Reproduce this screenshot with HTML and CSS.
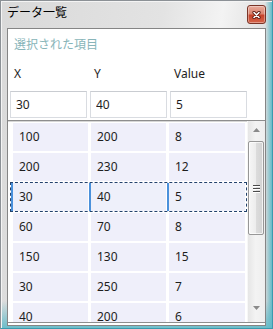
FILE: index.html
```html
<!DOCTYPE html>
<html lang="ja">
<head>
    <meta charset="UTF-8">
    <meta name="viewport" content="width=device-width, initial-scale=1.0">
    <title>データ一覧</title>
    <link rel="stylesheet" href="styles.css">
</head>
<body>
    <div class="window">
        <div class="titlebar">
            <span class="title">データ一覧</span>
            <button class="close-button" aria-label="閉じる">
                <svg width="9" height="8" viewBox="0 0 9 8">
                    <path d="M2 1.5 L7 6.5 M7 1.5 L2 6.5" stroke="#5a1a10" stroke-width="3.2" stroke-linecap="round"/>
                    <path d="M2 1.5 L7 6.5 M7 1.5 L2 6.5" stroke="#ffffff" stroke-width="1.6" stroke-linecap="round"/>
                </svg>
            </button>
        </div>

        <div class="panel">
            <div class="heading">選択された項目</div>

            <div class="fields">
                <label class="field-label" for="fieldX">X</label>
                <label class="field-label" for="fieldY">Y</label>
                <label class="field-label" for="fieldValue">Value</label>
                <input type="text" id="fieldX" value="30">
                <input type="text" id="fieldY" value="40">
                <input type="text" id="fieldValue" value="5">
            </div>

            <div class="list">
                <div class="rows">
                    <div class="row"><div class="cell">100</div><div class="cell">200</div><div class="cell">8</div></div>
                    <div class="row"><div class="cell">200</div><div class="cell">230</div><div class="cell">12</div></div>
                    <div class="row selected"><div class="cell">30</div><div class="cell">40</div><div class="cell">5</div></div>
                    <div class="row"><div class="cell">60</div><div class="cell">70</div><div class="cell">8</div></div>
                    <div class="row"><div class="cell">150</div><div class="cell">130</div><div class="cell">15</div></div>
                    <div class="row"><div class="cell">30</div><div class="cell">250</div><div class="cell">7</div></div>
                    <div class="row"><div class="cell">40</div><div class="cell">200</div><div class="cell">6</div></div>
                </div>

                <div class="scrollbar">
                    <div class="scroll-arrow up">
                        <svg width="7" height="4" viewBox="0 0 7 4"><path d="M0 4 L3.5 0 L7 4 Z" fill="#8a8a8a"/></svg>
                    </div>
                    <div class="thumb">
                        <span class="grip"></span>
                        <span class="grip"></span>
                        <span class="grip"></span>
                    </div>
                    <div class="scroll-arrow down">
                        <svg width="7" height="4" viewBox="0 0 7 4"><path d="M0 0 L7 0 L3.5 4 Z" fill="#8a8a8a"/></svg>
                    </div>
                </div>
            </div>
        </div>
    </div>
</body>
</html>
```

FILE: styles.css
```css
body {
    margin: 0;
    font-family: "Noto Sans", "Noto Sans CJK JP", sans-serif;
    font-size: 12px;
    color: #1e1e1e;
}

/* Window frame */
.window {
    width: 273px;
    height: 329px;
    box-sizing: border-box;
    display: flex;
    flex-direction: column;
    padding: 0 6px 2px 6px;
    border: 1px solid #8c9196;
    border-right-color: #3a9aae;
    border-bottom-color: #3a9aae;
    background:
        linear-gradient(to bottom, rgba(96,186,200,0) 300px, rgba(96,186,200,0.9) 327px),
        linear-gradient(to right, rgba(96,186,200,0) 264px, rgba(96,186,200,0.95) 271px),
        linear-gradient(100deg, #d9d9d9 0%, #e3e3e3 50%, #f3f3f3 68%, #e0e0e0 82%, #d6d6d6 100%);
    box-shadow: inset 1px 1px 0 #f4f4f4;
}

.titlebar {
    height: 27px;
    display: flex;
    align-items: center;
    justify-content: space-between;
}

.title {
    align-self: flex-start;
    margin-top: 3px;
    font-family: "Noto Sans CJK JP", sans-serif;
    font-size: 12px;
    line-height: 16px;
    color: #000;
}

.close-button {
    width: 19px;
    height: 19px;
    padding: 0;
    display: flex;
    align-items: center;
    justify-content: center;
    border: 1px solid #7a3427;
    border-radius: 3px;
    background: linear-gradient(to bottom, #e9ab9c 0%, #da8570 45%, #c6432a 55%, #d5644a 100%);
    box-shadow: inset 0 0 0 1px rgba(255,255,255,0.35);
}

/* White content panel */
.panel {
    flex: 1;
    display: flex;
    flex-direction: column;
    padding-bottom: 2px;
    background-color: #ffffff;
    border: 1px solid #858585;
}

.heading {
    margin: 7px 0 0 6px;
    font-family: "Noto Sans CJK JP", sans-serif;
    line-height: 16px;
    color: #88b5b9;
}

.fields {
    display: grid;
    grid-template-columns: repeat(3, 77px);
    column-gap: 3px;
    row-gap: 9px;
    margin: 14px 0 0 2px;
}

.field-label {
    padding-left: 4px;
    line-height: 16px;
}

.fields input {
    width: 77px;
    height: 27px;
    box-sizing: border-box;
    padding: 0 5px;
    font-family: inherit;
    font-size: 12px;
    color: #1e1e1e;
    border: 1px solid #d9dce1;
    border-top-color: #c9ccd1;
    outline: none;
}

/* List with scrollbar */
.list {
    height: 203px;
    box-sizing: border-box;
    display: flex;
    margin-top: 2px;
    overflow: hidden;
    border-top: 1px solid #8e8e8e;
    border-bottom: 1px solid #8e8e8e;
    box-shadow: inset 0 1px 0 #d6d6d6;
}

.rows {
    width: 240px;
    padding: 1px 0 0 2px;
    box-sizing: border-box;
    overflow: hidden;
}

.row {
    width: 237px;
    height: 30px;
    box-sizing: border-box;
    display: flex;
    gap: 3px;
    padding: 1px 2px 1px 3px;
}

.cell {
    width: 75px;
    line-height: 28px;
    padding-left: 6px;
    box-sizing: border-box;
    background-color: #efeffa;
}

.cell:last-child {
    width: 76px;
}

.row.selected {
    outline: 1px dashed #23426c;
    outline-offset: -1px;
}

.row.selected .cell {
    background-color: #eef0fa;
    box-shadow: -2px 0 0 #4a91db;
}

.scrollbar {
    width: 17px;
    display: flex;
    flex-direction: column;
    background: linear-gradient(to right, #e6e6e6, #f3f3f3 45%, #eeeeee);
    border-left: 1px solid #f7f7f7;
}

.scroll-arrow {
    height: 17px;
    display: flex;
    justify-content: center;
    align-items: center;
}

.scroll-arrow.down {
    margin-top: auto;
    align-items: flex-start;
    padding-top: 2px;
    height: 15px;
    margin-bottom: 1px;
}

.thumb {
    height: 94px;
    margin: 3px 1px 0 0;
    box-sizing: border-box;
    display: flex;
    flex-direction: column;
    align-items: center;
    justify-content: center;
    gap: 2px;
    border: 1px solid #979797;
    border-radius: 2px;
    background: linear-gradient(to right, #f6f6f6, #ececec 50%, #dcdcdc 51%, #d2d2d2);
    box-shadow: inset 0 0 0 1px rgba(255,255,255,0.7);
}

.grip {
    width: 7px;
    height: 1px;
    background-color: #4a4a4a;
    box-shadow: 0 1px 0 #ffffff;
}
```
